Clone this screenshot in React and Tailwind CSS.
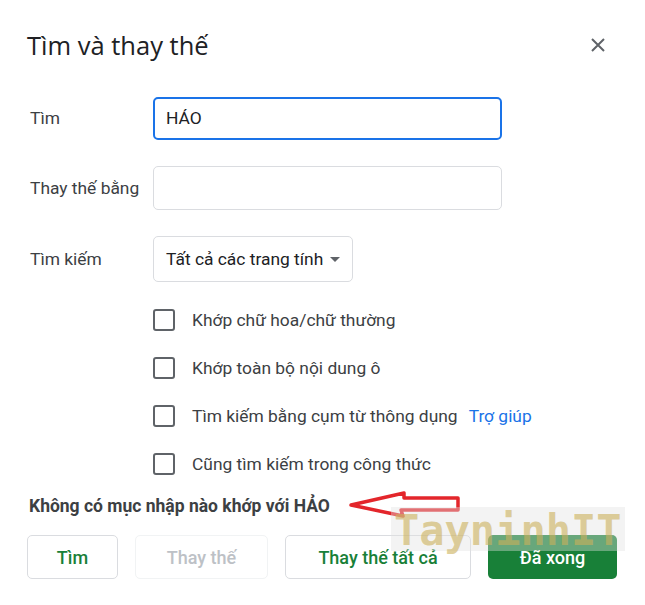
export default function App() {
  const checks = [
    { t: "Khớp chữ hoa/chữ thường" },
    { t: "Khớp toàn bộ nội dung ô" },
    { t: "Tìm kiếm bằng cụm từ thông dụng", help: true },
    { t: "Cũng tìm kiếm trong công thức" },
  ];
  return (
    <div className="relative w-[645px] h-[605px] bg-white overflow-hidden font-[Roboto,'Noto_Sans',sans-serif] text-[#3c4043]">
      <div className="px-[27px] pt-[29px]">
        <div className="flex items-center justify-between h-[32px]">
          <div className="text-[25.5px] leading-[32px] text-[#202124] font-['Open_Sans',sans-serif]">Tìm và thay thế</div>
          <svg width="14" height="14" viewBox="0 0 14 14" className="mr-[13px]">
            <path d="M1 1L13 13M13 1L1 13" stroke="#5f6368" strokeWidth="2" />
          </svg>
        </div>

        <div className="flex items-center mt-[36px]">
          <div className="w-[126px] pl-[3px] text-[17.4px]">Tìm</div>
          <div className="w-[349px] h-[43px] border-2 border-[#1a73e8] rounded-[5px] flex items-center pl-[11px] text-[17.4px] text-[#202124]">
            HÁO
          </div>
        </div>

        <div className="flex items-center mt-[26px]">
          <div className="w-[126px] pl-[3px] text-[17.4px]">Thay thế bằng</div>
          <div className="w-[349px] h-[44px] border border-[#dadce0] rounded-[5px]" />
        </div>

        <div className="flex items-center mt-[26px]">
          <div className="w-[126px] pl-[3px] text-[17.4px]">Tìm kiếm</div>
          <div className="w-[200px] h-[46px] border border-[#dadce0] rounded-[5px] flex items-center pl-[12px] text-[17.4px] text-[#202124]">
            <span>Tất cả các trang tính</span>
            <svg width="10" height="5" viewBox="0 0 10 5" className="ml-[7px]">
              <path d="M0 0L10 0L5 5Z" fill="#5f6368" />
            </svg>
          </div>
        </div>

        <div className="mt-[14px]">
          {checks.map((c, i) => (
            <div key={i} className="flex items-center h-[48px] pl-[126px]">
              <div className="w-[22px] h-[22px] border-2 border-[#5f6368] rounded-[3px]" />
              <span className="ml-[17px] text-[17.4px]">{c.t}</span>
              {c.help && <span className="ml-[11px] text-[17.4px] text-[#1a73e8]">Trợ giúp</span>}
            </div>
          ))}
        </div>

        <div className="mt-[6px] pl-[2px] text-[17.5px] leading-[24px] font-bold text-[#3c4043]">
          Không có mục nhập nào khớp với HẢO
        </div>

        <div className="flex mt-[17px] gap-[17px]">
          <div className="w-[91px] h-[44px] border border-[#dadce0] rounded-[5px] flex items-center justify-center text-[18px] font-medium text-[#188038]">
            Tìm
          </div>
          <div className="w-[133px] h-[44px] border border-[#f1f3f4] rounded-[5px] flex items-center justify-center text-[18px] font-medium text-[#bdc1c6]">
            Thay thế
          </div>
          <div className="w-[186px] h-[44px] border border-[#dadce0] rounded-[5px] flex items-center justify-center text-[18px] font-medium text-[#188038]">
            Thay thế tất cả
          </div>
          <div className="w-[129px] h-[44px] bg-[#188038] rounded-[5px] flex items-center justify-center text-[18px] font-medium text-white">
            Đã xong
          </div>
        </div>
      </div>

      <svg className="absolute left-0 top-0" width="645" height="605">
        <polygon
          points="351,505 404,493 404,498 458,498 458,510 401,510 403,516"
          fill="white"
          stroke="#e3262b"
          strokeWidth="3.5"
          strokeLinejoin="round"
        />
      </svg>

      <div className="absolute left-[391px] top-[507px] w-[234px] h-[44px] bg-[rgba(225,225,225,0.4)]" />
      <div className="absolute left-[394px] top-[503px] text-[42px] leading-[56px] font-bold font-['DejaVu_Sans_Mono',monospace] text-[rgba(204,176,90,0.6)] whitespace-nowrap">
        TayninhIT
      </div>
    </div>
  );
}
